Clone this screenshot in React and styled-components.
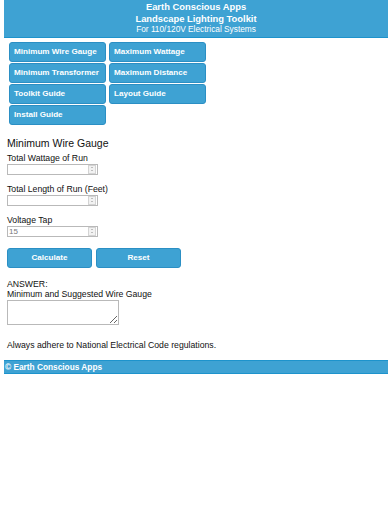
import React from "react";
import styled, { createGlobalStyle } from "styled-components";

const Global = createGlobalStyle`
  html, body { margin: 0; padding: 0; background: #fff; }
  body { font-family: "Liberation Sans", Arial, sans-serif; color: #111; }
`;

const Page = styled.div`
  padding: 0 4px;
  width: 384px;
`;

const Header = styled.header`
  background: #3ea2d3;
  border-bottom: 1px solid #1d93cc;
  color: #fff;
  text-align: center;
  padding: 1px 0 1px;
  line-height: 11.5px;
`;

const HeadLine = styled.div`
  font-weight: ${(p) => (p.$bold ? 700 : 400)};
  font-size: ${(p) => (p.$bold ? "9.4px" : "8.3px")};
`;

const Nav = styled.nav`
  display: grid;
  grid-template-columns: 97px 97px;
  gap: 1px 3px;
  margin: 4px 0 0 5px;
`;

const NavButton = styled.button`
  height: 20px;
  background: #3ea2d3;
  border: 1px solid #2b8fc4;
  border-radius: 3px;
  color: #fff;
  font-family: "Liberation Sans", Arial, sans-serif;
  font-weight: 700;
  font-size: 8.1px;
  text-align: left;
  padding: 0 0 0 4px;
  cursor: pointer;
`;

const Form = styled.section`
  padding: 0 3px;
`;

const Title = styled.h2`
  margin: 12px 0 3px;
  font-size: 10.5px;
  font-weight: 400;
  line-height: 13px;
`;

const Label = styled.div`
  font-size: 8.7px;
  line-height: 10px;
`;

const Field = styled.div`
  margin-bottom: ${(p) => p.$mb || "0"};
`;

const NumBox = styled.div`
  display: flex;
  align-items: center;
  width: 89px;
  height: 9px;
  border: 1px solid #b9b9b9;
  background: #fff;
  margin-top: 1px;
`;

const NumInput = styled.input`
  flex: 1;
  min-width: 0;
  border: 0;
  padding: 0 1px;
  height: 9px;
  font-family: "Liberation Sans", Arial, sans-serif;
  font-size: 8px;
  color: #777;
  outline: none;
  background: transparent;
`;

const Spin = styled.div`
  width: 6px;
  height: 7px;
  margin-right: 1px;
  border: 1px solid #d4d4d4;
  background: #f2f2f2;
  display: flex;
  flex-direction: column;
  align-items: center;
  justify-content: space-around;
`;

const Arrow = styled.span`
  width: 0;
  height: 0;
  border-left: 1.5px solid transparent;
  border-right: 1.5px solid transparent;
  ${(p) =>
    p.$down
      ? "border-top: 1.5px solid #888;"
      : "border-bottom: 1.5px solid #888;"}
`;

const Actions = styled.div`
  display: flex;
  gap: 4px;
  margin-top: 11px;
`;

const ActionButton = styled.button`
  width: 85px;
  height: 20px;
  background: #3ea2d3;
  border: 1px solid #2b8fc4;
  border-radius: 3px;
  color: #fff;
  font-family: "Liberation Sans", Arial, sans-serif;
  font-weight: 700;
  font-size: 8.1px;
  cursor: pointer;
`;

const Answer = styled.div`
  margin-top: 11px;
`;

const AnswerBox = styled.textarea`
  display: block;
  box-sizing: border-box;
  width: 112px;
  height: 25px;
  border: 1px solid #b9b9b9;
  margin-top: 1px;
  padding: 1px;
  font-size: 8px;
`;

const Note = styled.p`
  margin: 15px 0 0;
  font-size: 8.7px;
  line-height: 10px;
`;

const Footer = styled.footer`
  margin-top: 10px;
  background: #3ea2d3;
  border-top: 1px solid #1d93cc;
  border-bottom: 1px solid #1d93cc;
  color: #fff;
  font-weight: 700;
  font-size: 8.3px;
  line-height: 12px;
  padding: 0 1px;
`;

function NumberField({ label, value, mb }) {
  return (
    <Field $mb={mb}>
      <Label>{label}</Label>
      <NumBox>
        <NumInput type="text" defaultValue={value} />
        <Spin>
          <Arrow />
          <Arrow $down />
        </Spin>
      </NumBox>
    </Field>
  );
}

export default function App() {
  return (
    <>
      <Global />
      <Page>
        <Header>
          <HeadLine $bold>Earth Conscious Apps</HeadLine>
          <HeadLine $bold>Landscape Lighting Toolkit</HeadLine>
          <HeadLine>For 110/120V Electrical Systems</HeadLine>
        </Header>
        <Nav>
          <NavButton>Minimum Wire Gauge</NavButton>
          <NavButton>Maximum Wattage</NavButton>
          <NavButton>Minimum Transformer</NavButton>
          <NavButton>Maximum Distance</NavButton>
          <NavButton>Toolkit Guide</NavButton>
          <NavButton>Layout Guide</NavButton>
          <NavButton>Install Guide</NavButton>
        </Nav>
        <Form>
          <Title>Minimum Wire Gauge</Title>
          <NumberField label="Total Wattage of Run" mb="9px" />
          <NumberField label="Total Length of Run (Feet)" mb="9px" />
          <NumberField label="Voltage Tap" value="15" />
          <Actions>
            <ActionButton>Calculate</ActionButton>
            <ActionButton>Reset</ActionButton>
          </Actions>
          <Answer>
            <Label>ANSWER:</Label>
            <Label>Minimum and Suggested Wire Gauge</Label>
            <AnswerBox />
          </Answer>
          <Note>Always adhere to National Electrical Code regulations.</Note>
        </Form>
        <Footer>© Earth Conscious Apps</Footer>
      </Page>
    </>
  );
}
